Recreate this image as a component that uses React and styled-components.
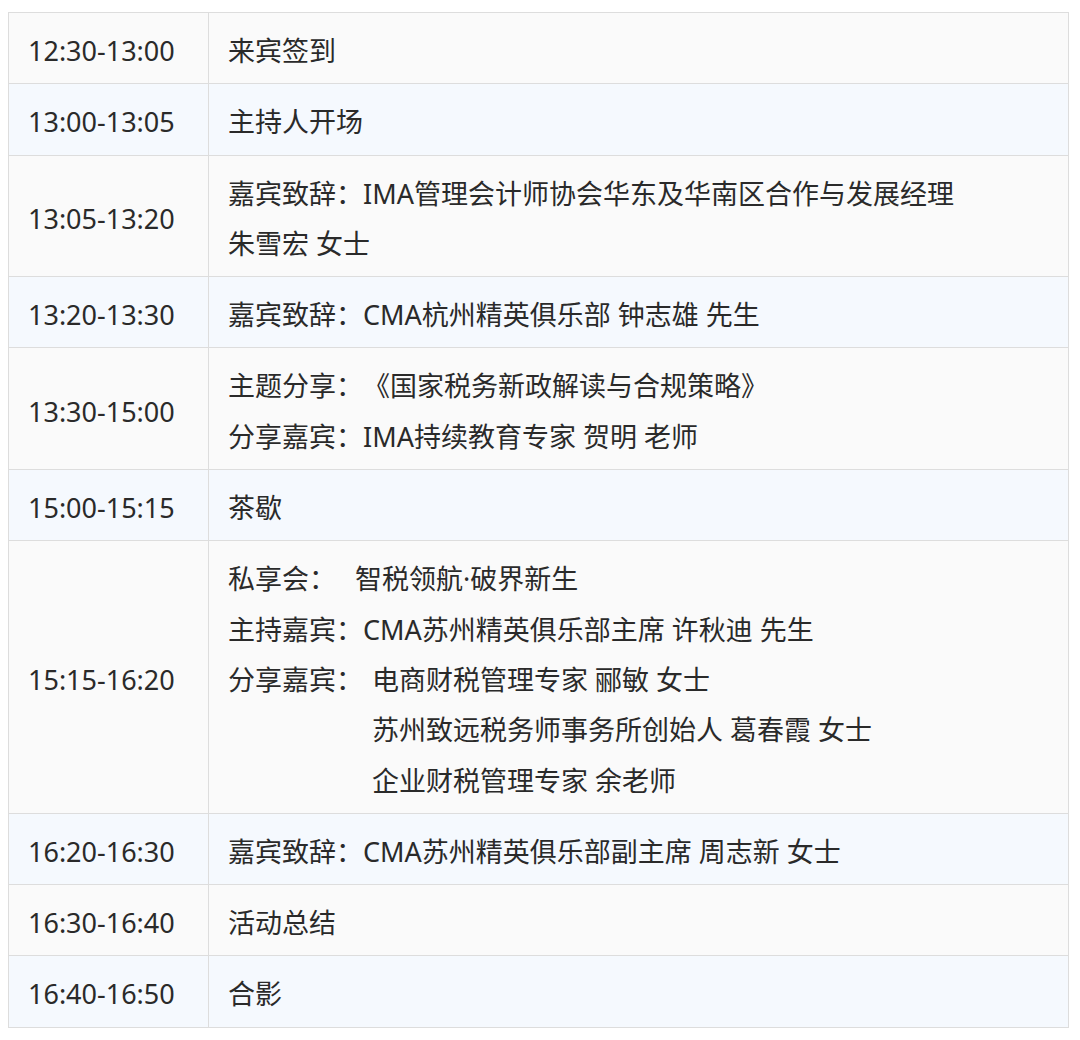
import React from "react";
import styled, { createGlobalStyle } from "styled-components";

const Global = createGlobalStyle`
  html, body { margin: 0; padding: 0; background: #ffffff; }
  body { font-family: "Noto Sans", "Noto Sans CJK SC", sans-serif; }
`;

const Page = styled.div`
  padding: 12px 12px 12px 8px;
`;

const Table = styled.table`
  width: 1061px;
  border-collapse: collapse;
  table-layout: fixed;
  font-size: 27px;
  color: #2a2a2a;
  font-feature-settings: "chws" 0, "halt" 0, "palt" 0;
  font-kerning: none;
  text-spacing-trim: space-all;
`;

const Row = styled.tr`
  background: ${(p) => (p.$alt ? "#f5f9fe" : "#fafafa")};
`;

const Cell = styled.td`
  border: 1px solid #dddddd;
  padding: 13px 10px 7px 19px;
  line-height: 50.3px;
  vertical-align: middle;
  white-space: nowrap;
`;

const TimeCell = styled(Cell)`
  width: 170px;
`;

const Line = styled.div`
  padding-left: ${(p) => p.$indent || 0}px;
`;

const Gap = styled.span`
  display: inline-block;
  width: ${(p) => p.$w}px;
`;

const rows = [
  { t: "12:30-13:00", c: [["来宾签到"]] },
  { t: "13:00-13:05", c: [["主持人开场"]] },
  {
    t: "13:05-13:20",
    c: [["嘉宾致辞：IMA管理会计师协会华东及华南区合作与发展经理"], ["朱雪宏 女士"]],
  },
  { t: "13:20-13:30", c: [["嘉宾致辞：CMA杭州精英俱乐部 钟志雄 先生"]] },
  {
    t: "13:30-15:00",
    c: [["主题分享：《国家税务新政解读与合规策略》"], ["分享嘉宾：IMA持续教育专家 贺明 老师"]],
  },
  { t: "15:00-15:15", c: [["茶歇"]] },
  {
    t: "15:15-16:20",
    c: [
      ["私享会：", 19, "智税领航·破界新生"],
      ["主持嘉宾：CMA苏州精英俱乐部主席 许秋迪 先生"],
      ["分享嘉宾：", 9, "电商财税管理专家 郦敏 女士"],
      ["苏州致远税务师事务所创始人 葛春霞 女士", 0, null, 144],
      ["企业财税管理专家 余老师", 0, null, 144],
    ],
  },
  { t: "16:20-16:30", c: [["嘉宾致辞：CMA苏州精英俱乐部副主席 周志新 女士"]] },
  { t: "16:30-16:40", c: [["活动总结"]] },
  { t: "16:40-16:50", c: [["合影"]] },
];

export default function App() {
  return (
    <Page>
      <Global />
      <Table>
        <tbody>
          {rows.map((r, i) => (
            <Row key={r.t} $alt={i % 2 === 1}>
              <TimeCell>{r.t}</TimeCell>
              <Cell>
                {r.c.map(([a, gap, b, indent], j) => (
                  <Line key={j} $indent={indent}>
                    {a}
                    {b ? (
                      <>
                        <Gap $w={gap} />
                        {b}
                      </>
                    ) : null}
                  </Line>
                ))}
              </Cell>
            </Row>
          ))}
        </tbody>
      </Table>
    </Page>
  );
}
